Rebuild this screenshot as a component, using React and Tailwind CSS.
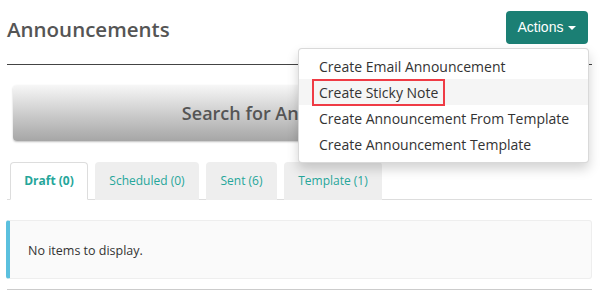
import { useState } from 'react';

const tabs = [
  { label: 'Draft (0)', width: 'w-[78px]', active: true },
  { label: 'Scheduled (0)', width: 'w-[104px]' },
  { label: 'Sent (6)', width: 'w-[71px]' },
  { label: 'Template (1)', width: 'w-[98px]' },
];

const menuItems = [
  'Create Email Announcement',
  'Create Sticky Note',
  'Create Announcement From Template',
  'Create Announcement Template',
];

const App = () => {
  const [open] = useState(true);

  return (
    <div className="relative w-[600px] h-[300px] bg-white overflow-hidden font-['Open_Sans',sans-serif]">
      <div className="pl-[7px] pr-[8px]">
        {/* Header */}
        <div className="flex justify-between items-start h-[65px] border-b border-[#444]">
          <h1 className="mt-[15px] text-[20.5px] leading-[28px] font-semibold text-[#555]">Announcements</h1>
          <button className="mt-[11px] mr-[4px] w-[82px] h-[33px] rounded-[4px] bg-[#1b7f74] text-white text-[14px] font-['Liberation_Sans',Arial,sans-serif] flex items-center justify-center gap-[5px]">
            Actions
            <span className="w-0 h-0 border-l-[4px] border-r-[4px] border-t-[4px] border-l-transparent border-r-transparent border-t-white" />
          </button>
        </div>

        {/* Search bar */}
        <div className="ml-[6px] mr-[5px] mt-[20px] h-[56px] rounded-[4px] bg-gradient-to-b from-[#f7f7f7] to-[#a6a6a6] shadow-[0_1px_2px_rgba(0,0,0,0.25)] flex items-center justify-center">
          <span className="text-[18px] font-semibold text-[#555]">Search for Announcements</span>
        </div>

        {/* Tabs */}
        <div className="mt-[21px] flex gap-[7px] pl-[3px] border-b border-[#ddd]">
          {tabs.map((t) => (
            <div
              key={t.label}
              className={`${t.width} h-[38px] -mb-px rounded-t-[4px] flex items-center justify-center text-[12px] text-[#26a69a] ${
                t.active ? 'bg-white border border-[#ddd] border-b-white font-bold' : 'bg-[#eee] border border-transparent'
              }`}
            >
              {t.label}
            </div>
          ))}
        </div>

        {/* Empty state */}
        <div className="mt-[20px] -ml-px h-[59px] rounded-[3px] bg-[#fafafa] border border-[#eee] border-l-[4px] border-l-[#5bc0de] flex items-center pl-[18px] pt-[3px]">
          <span className="text-[12.5px] text-[#333]">No items to display.</span>
        </div>

        <div className="mt-[10px] border-b border-[#ccc]" />
      </div>

      {/* Dropdown menu */}
      {open && (
        <div className="absolute left-[298px] top-[48px] w-[291px] h-[115px] bg-white border border-[rgba(0,0,0,0.15)] rounded-[4px] shadow-[0_6px_12px_rgba(0,0,0,0.175)] pt-[4px]">
          {menuItems.map((item, i) => (
            <div
              key={item}
              className={`h-[26px] flex items-center pl-[20px] text-[14px] text-[#333] ${i === 1 ? 'bg-[#f5f5f5]' : ''}`}
            >
              <span className="relative">
                {item}
                {i === 1 && (
                  <span className="absolute -left-[7px] -right-[7px] -top-[3px] -bottom-[3px] border-2 border-[#ef3b45]" />
                )}
              </span>
            </div>
          ))}
        </div>
      )}
    </div>
  );
};

export default App;
